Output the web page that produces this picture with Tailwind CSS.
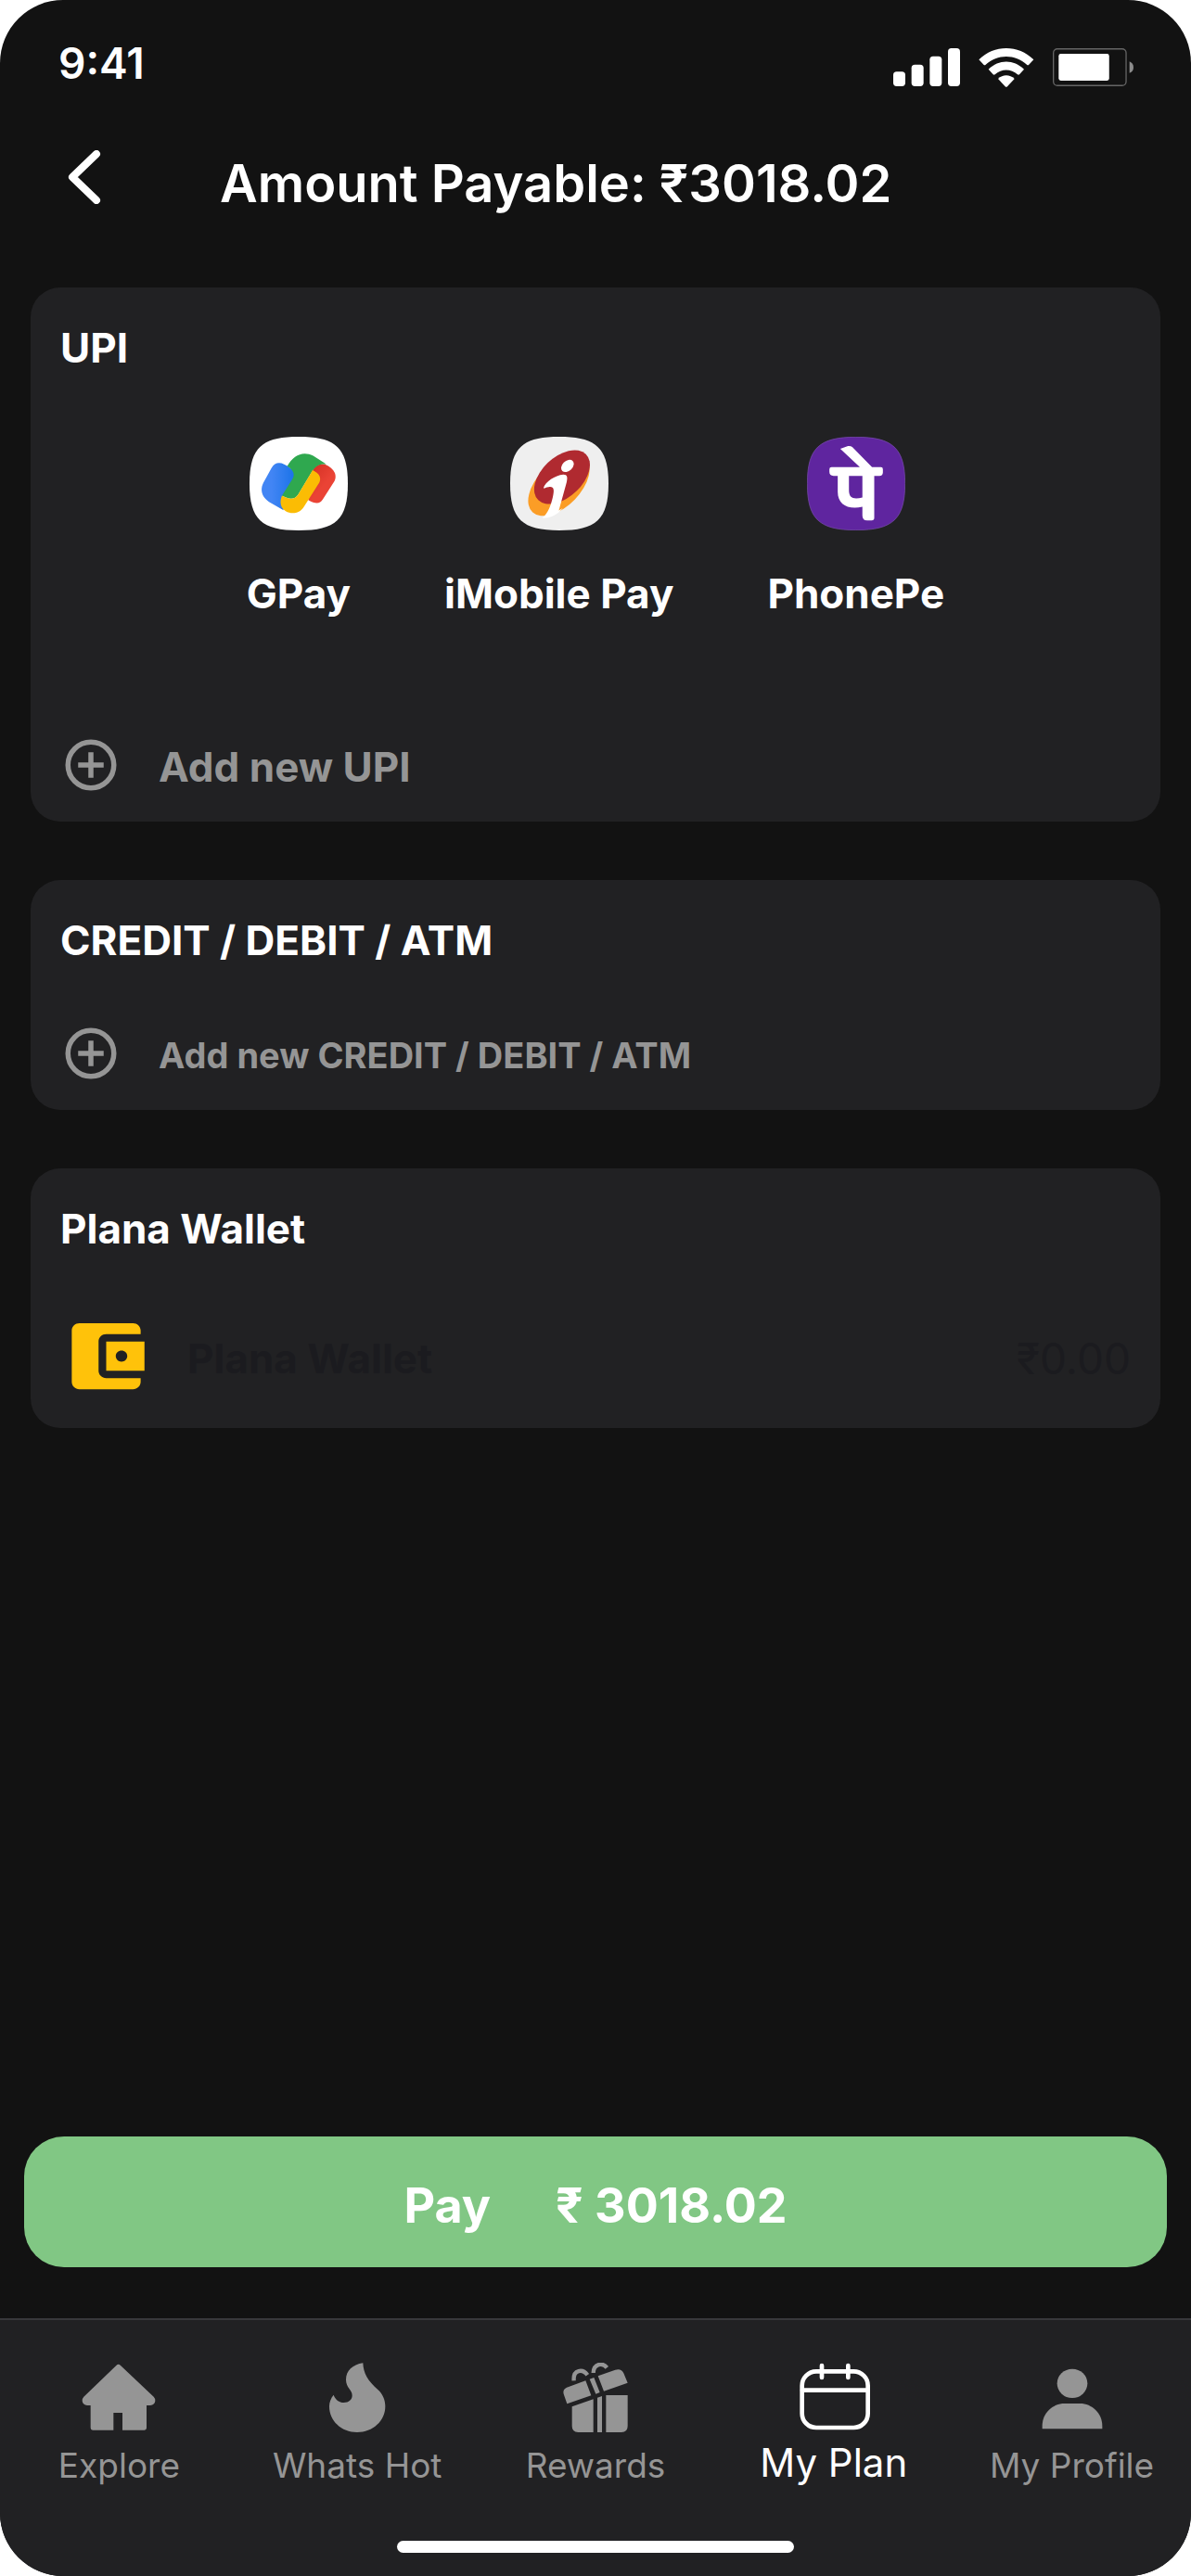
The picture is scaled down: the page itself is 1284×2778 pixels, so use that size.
<!DOCTYPE html>
<html lang="en">
<head>
<meta charset="utf-8">
<meta name="viewport" content="width=device-width, initial-scale=1">
<title>Amount Payable</title>
<script src="https://cdn.jsdelivr.net/npm/@tailwindcss/browser@4"></script>
</head>
<body class="bg-white font-['Inter',sans-serif] text-white">
<div class="flex min-h-screen flex-col overflow-hidden rounded-[68px] bg-[#121212]">

  <!-- Status bar -->
  <div class="flex items-start justify-between pt-9 pr-[62px] pl-[63px]">
    <span class="text-[46px] leading-[64px] font-semibold">9:41</span>
    <div class="mt-4 flex items-start gap-5">
      <svg class="h-[41px] w-[72px]" viewBox="128 66 216 123" fill="#fff" aria-hidden="true">
        <rect x="128" y="142" width="39" height="47" rx="11"/><rect x="187" y="119" width="39" height="70" rx="11"/><rect x="246" y="92" width="39" height="97" rx="11"/><rect x="305" y="66" width="39" height="123" rx="11"/>
      </svg>
      <svg class="h-[42px] w-[60px]" viewBox="405 66 180 126" fill="#fff" aria-hidden="true">
        <path d="M406 103C455 54 534 54 583 103L567 120Q564 122 561 119C524 84 465 84 428 119Q425 122 422 120Z"/>
        <path d="M437 134C470 101 519 101 552 134L537 151Q534 153 531 151C510 132 479 132 458 151Q455 153 452 151Z"/>
        <path d="M468 165C483 150 506 150 521 165L498 190Q494 193 491 190Z"/>
      </svg>
      <svg class="h-[41px] w-[87px]" viewBox="645 66 262 123" aria-hidden="true">
        <rect x="647" y="68" width="236" height="119" rx="13" fill="none" stroke="#666" stroke-width="4"/><rect x="664" y="84" width="164" height="87" rx="7" fill="#fff"/><path d="M894 109Q907 115 907 128T894 146Z" fill="#8c8c8c"/>
      </svg>
    </div>
  </div>

  <header class="mt-[62px] flex items-start gap-32 pr-8 pl-[73px]">
    <button type="button" aria-label="Back" class="shrink-0">
      <svg class="block h-[58px] w-9" viewBox="0 0 36 58" fill="none" stroke="#fff" stroke-width="8" stroke-linecap="round" stroke-linejoin="round"><path d="M31 4L5 29L31 54"/></svg>
    </button>
    <h1 class="text-[56px] leading-[72px] font-semibold">Amount Payable: ₹3018.02</h1>
  </header>

  <main class="mt-[76px] mb-10 flex flex-col gap-[63px] px-[33px]">
    <section class="rounded-[32px] bg-[#212123] px-8 pt-[39px] pb-7">
      <h2 class="text-[44px] leading-[52px] font-bold">UPI</h2>
      <div class="mt-[70px] flex justify-center gap-[101px]">
        <button type="button" class="flex flex-col items-center gap-[42px]">
          <svg class="h-[101px] w-[106px]" viewBox="93 60 318 302" preserveAspectRatio="none" aria-hidden="true">
            <defs><linearGradient id="blue"><stop offset=".3" stop-color="#4285f4"/><stop offset="1" stop-color="#1a73e8"/></linearGradient>
            <linearGradient id="red" x1="0" y1="0" x2=".5" y2=".6"><stop stop-color="#d02e22"/><stop offset="1" stop-color="#ea4335"/></linearGradient></defs>
            <path d="M252 60C372 60 411 96 411 211C411 326 372 362 252 362C132 362 93 326 93 211C93 96 132 60 252 60Z" fill="#fff"/>
            <path d="M164 161C174 144 188 141 205 149L218 156C238 168 244 182 236 196L198 255L203 297L156 270C133 254 126 232 138 208Z" fill="url(#blue)"/>
            <path d="M295 172C304 152 320 145 337 149C364 160 380 182 366 206L330 262C320 278 306 277 283 264Z" fill="url(#red)"/>
            <path d="M215 155C235 118 266 105 299 121L341 148C322 147 309 152 297 169L250 247C240 263 220 263 198 250L232 196C242 179 232 165 215 155Z" fill="#2fa84f"/>
            <path d="M297 168C318 178 326 190 319 207L268 287C255 307 230 311 210 300C192 288 190 270 198 250C220 263 240 263 250 247Z" fill="#fbbc04"/>
          </svg>
          <span class="text-[44px] leading-[52px] font-bold">GPay</span>
        </button>
        <button type="button" class="flex flex-col items-center gap-[42px]">
          <svg class="h-[101px] w-[106px]" viewBox="152 90 307 302" preserveAspectRatio="none" aria-hidden="true">
            <path d="M305 90C420 90 459 126 459 241C459 356 420 392 305 392C190 392 152 356 152 241C152 126 190 90 305 90Z" fill="#efefef"/>
            <ellipse cx="304" cy="246" rx="120" ry="68" transform="rotate(-47 304 246)" fill="#fb9d26"/>
            <ellipse cx="314" cy="220" rx="105" ry="64" transform="rotate(-45 314 220)" fill="#b02a30"/>
            <ellipse cx="331" cy="184" rx="23" ry="16" transform="rotate(-46 331 184)" fill="#fff"/>
            <path d="M256 255C262 236 292 214 318 212C331 212 332 222 328 238L304 328L316 320C300 340 280 353 252 352C272 335 279 310 285 285C291 258 288 249 272 252C262 253 258 258 256 255Z" fill="#fff"/>
          </svg>
          <span class="text-[44px] leading-[52px] font-bold">iMobile Pay</span>
        </button>
        <button type="button" class="flex flex-col items-center gap-[42px]">
          <svg class="h-[101px] w-[106px]" viewBox="1077 90 307 302" preserveAspectRatio="none" aria-hidden="true">
            <path d="M1230 91C1345 91 1383 127 1383 241C1383 355 1345 391 1230 391C1115 391 1078 355 1078 241C1078 127 1115 91 1230 91Z" fill="#5f259f" stroke="#7b4fae" stroke-width="2"/>
            <path d="M1181 129L1205 120Q1214 119 1219 124L1280 188H1308Q1314 188 1314 195V205Q1314 216 1303 216H1287V352Q1287 360 1279 360H1265Q1250 360 1250 344V316C1205 326 1173 309 1173 268V216H1160Q1147 216 1147 203V195Q1147 188 1154 188H1242ZM1208 216V262C1208 288 1222 293 1250 286V216Z" fill="#fff" fill-rule="evenodd"/>
          </svg>
          <span class="text-[44px] leading-[52px] font-bold">PhonePe</span>
        </button>
      </div>
      <button type="button" class="mt-[126px] flex items-center gap-10 text-[#959595]">
        <svg class="size-[66px]" viewBox="0 0 24 24" fill="none" stroke="currentColor" stroke-width="2" aria-hidden="true"><circle cx="12" cy="12" r="9"/><path d="M12 7v10M7 12h10"/></svg>
        <span class="pt-1 text-[44px] leading-[52px] font-bold">Add new UPI</span>
      </button>
    </section>

    <section class="rounded-[32px] bg-[#212123] px-8 pt-[39px] pb-7">
      <h2 class="text-[44px] leading-[52px] font-bold">CREDIT / DEBIT / ATM</h2>
      <button type="button" class="mt-[63px] flex items-center gap-10 text-[#959595]">
        <svg class="size-[66px]" viewBox="0 0 24 24" fill="none" stroke="currentColor" stroke-width="2" aria-hidden="true"><circle cx="12" cy="12" r="9"/><path d="M12 7v10M7 12h10"/></svg>
        <span class="pt-1 text-[38px] leading-[52px] font-bold">Add new CREDIT / DEBIT / ATM</span>
      </button>
    </section>

    <section class="rounded-[32px] bg-[#212123] px-8 pt-[39px] pb-[30px]">
      <h2 class="text-[44px] leading-[52px] font-bold">Plana Wallet</h2>
      <div class="mt-16 flex items-center text-[#1b1b1f]">
        <svg class="h-[95px] w-[99px]" viewBox="0 0 24 24" preserveAspectRatio="none" fill="#ffc20a" aria-hidden="true"><path d="M21 18v1c0 1.1-.9 2-2 2H5c-1.11 0-2-.9-2-2V5c0-1.1.89-2 2-2h14c1.1 0 2 .9 2 2v1h-9c-1.11 0-2 .9-2 2v8c0 1.1.89 2 2 2h9zm-9-2h10V8H12v8zm4-2.5c-.83 0-1.5-.67-1.5-1.5s.67-1.5 1.5-1.5 1.5.67 1.5 1.5-.67 1.5-1.5 1.5z"/></svg>
        <span class="ml-[38px] pt-1 text-[44px] leading-[52px] font-bold">Plana Wallet</span>
        <span class="ml-auto pt-1 text-[46px] leading-[52px]">₹0.00</span>
      </div>
    </section>
  </main>

  <button type="button" class="mx-[26px] mt-auto mb-[55px] flex h-[141px] items-center justify-center gap-[70px] rounded-[43px] bg-[#81c784] pt-2 text-[52px] font-bold">
    <span>Pay</span><span>₹ 3018.02</span>
  </button>

  <footer class="border-t-2 border-[#38383b] bg-[#212123] pb-[25px]">
    <nav class="grid grid-cols-5 pt-[46px] text-[37px] leading-[44px] text-[#959595]">
      <a href="#explore" class="flex flex-col items-center gap-[14px]">
        <svg class="h-[75px] w-20" viewBox="265 201 240 225" fill="currentColor" aria-hidden="true"><path d="M377 210Q384 203 391 210L498 311Q504 317 503 325Q501 338 487 339H475V412Q475 419 468 419H397V363H368V419H301Q294 419 294 412V339H283Q269 338 267 325Q266 317 272 311Z"/></svg>
        <span>Explore</span>
      </a>
      <a href="#hot" class="flex flex-col items-center gap-[14px]">
        <svg class="h-[75px] w-20" viewBox="1035 201 240 225" fill="currentColor" aria-hidden="true"><path d="M1174 202C1175 235 1190 260 1222 288C1238 302 1246 322 1246 342C1246 389 1206 426 1155 426C1104 426 1065 389 1065 342C1065 329 1070 316 1079 305C1085 321 1097 330 1112 330C1128 330 1139 321 1139 307C1139 288 1119 283 1119 256C1119 227 1140 207 1174 202Z"/></svg>
        <span>Whats Hot</span>
      </a>
      <a href="#rewards" class="flex flex-col items-center gap-[14px]">
        <svg class="h-[75px] w-20" viewBox="306 201 240 225" fill="currentColor" aria-hidden="true">
          <path d="M394 259L412 307L334 334L323 302Q319 287 333 281ZM407 254L421 249L440 297L427 302ZM434 244L490 224Q509 218 517 235L530 266L453 293Z"/>
          <path d="M350 343L419 319V426H370Q350 426 350 406ZM432 314L447 309V426H432ZM460 306H530V406Q530 426 510 426H460Z"/>
          <path d="M356 259C353 222 385 220 400 241M419 234C420 204 449 199 463 217" fill="none" stroke="currentColor" stroke-width="13"/>
        </svg>
        <span>Rewards</span>
      </a>
      <a href="#plan" aria-current="page" class="flex flex-col items-center gap-[14px] text-[42px] leading-[38px] text-white">
        <svg class="h-[75px] w-20" viewBox="1077 201 240 225" fill="none" stroke="currentColor" stroke-width="14" stroke-linecap="round" aria-hidden="true"><rect x="1094" y="229" width="213" height="182" rx="46"/><path d="M1095 290H1306M1158 210V249M1243 210V249"/></svg>
        <span>My Plan</span>
      </a>
      <a href="#profile" class="flex flex-col items-center gap-[14px]">
        <svg class="h-[75px] w-20" viewBox="497 201 240 225" fill="currentColor" aria-hidden="true"><ellipse cx="617" cy="268" rx="49" ry="47"/><path d="M520 415V405C520 365 553 333 592 333H642C681 333 714 365 714 405V415Z"/></svg>
        <span>My Profile</span>
      </a>
    </nav>
    <div class="mx-auto mt-[59px] h-[13px] w-1/3 rounded-full bg-white"></div>
  </footer>
</div>
</body>
</html>
